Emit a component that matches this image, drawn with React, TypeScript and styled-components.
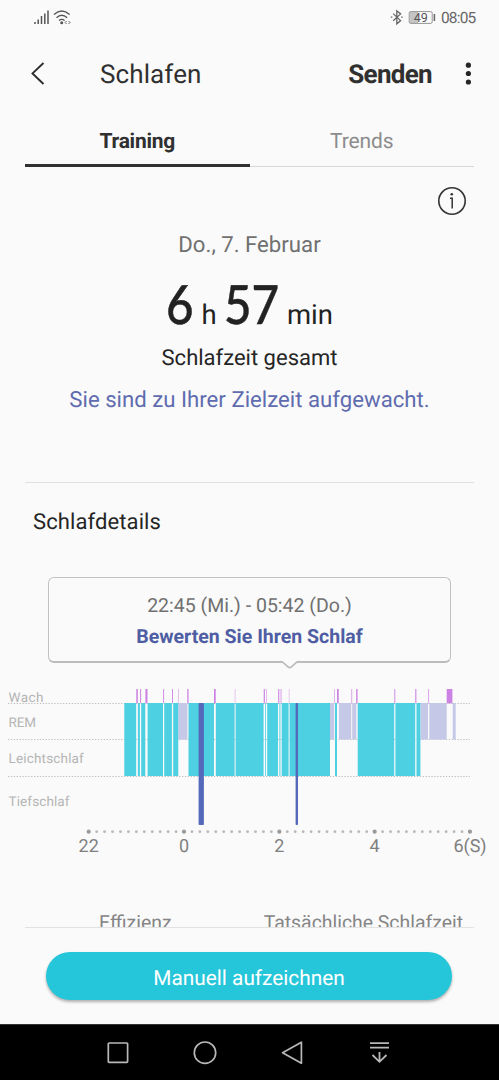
import React from "react";
import styled, { createGlobalStyle } from "styled-components";

const GlobalStyle = createGlobalStyle`
  * { box-sizing: border-box; }
  body { margin: 0; background: #fafafa; text-rendering: geometricPrecision; }
  button { font: inherit; border: 0; padding: 0; background: none; color: inherit; text-rendering: inherit; }
`;

const Screen = styled.div`
  width: 499px;
  height: 1080px;
  display: flex;
  flex-direction: column;
  overflow: hidden;
  background: #fafafa;
  font-family: Roboto, "Liberation Sans", sans-serif;
  color: #252525;
`;

const StatusBar = styled.div`
  height: 36px;
  display: flex;
  align-items: center;
  justify-content: space-between;
  padding: 0 23px 0 33px;
  svg { display: block; }
`;

const StatusGroup = styled.div`
  display: flex;
  align-items: center;
`;

const Clock = styled.span`
  font-size: 15.5px;
  line-height: 18px;
  letter-spacing: -0.85px;
  color: #666;
  margin: 0 -1px 0 5px;
  white-space: nowrap;
  width: 36px;
`;

const AppBar = styled.header`
  height: 76px;
  display: flex;
  align-items: center;
  padding: 0 25px 0 30px;
  svg { display: block; }
`;

const Title = styled.h1<{ $strong?: boolean }>`
  margin: 0;
  padding-top: 2px;
  font-size: 26px;
  line-height: 32px;
  font-weight: ${(p) => (p.$strong ? 700 : 400)};
  letter-spacing: ${(p) => (p.$strong ? "-0.7px" : "0.1px")};
  color: #303030;
  white-space: nowrap;
`;

const Spacer = styled.div`flex: 1;`;

const Tabs = styled.nav`
  height: 55px;
  margin: 0 25px;
  display: flex;
  box-shadow: inset 0 -1px #d8d8d8;
`;

const Tab = styled.div<{ $active?: boolean }>`
  flex: 1;
  display: flex;
  align-items: center;
  justify-content: center;
  padding-top: 7px;
  font-size: 21px;
  line-height: 26px;
  font-weight: ${(p) => (p.$active ? 700 : 400)};
  letter-spacing: ${(p) => (p.$active ? "-0.25px" : "-0.1px")};
  color: ${(p) => (p.$active ? "#303030" : "#8c8c8c")};
  border-bottom: 3px solid ${(p) => (p.$active ? "#303030" : "transparent")};
`;

const InfoRow = styled.div`
  height: 63px;
  display: flex;
  justify-content: flex-end;
  padding: 19px 32px 0 0;
`;

const Summary = styled.section`
  height: 253px;
  margin: 0 25px;
  display: flex;
  flex-direction: column;
  align-items: center;
  border-bottom: 1px solid #e0e0e0;
  white-space: nowrap;
`;

const Line = styled.div<{ $size: number; $height: number; $color: string; $track?: number; $bold?: boolean }>`
  font-size: ${(p) => p.$size}px;
  line-height: ${(p) => p.$height}px;
  color: ${(p) => p.$color};
  letter-spacing: ${(p) => p.$track ?? 0}px;
  font-weight: ${(p) => (p.$bold ? 700 : 400)};
  white-space: nowrap;
`;

const Duration = styled.div`
  height: 87px;
  padding-top: 9px;
  display: flex;
  align-items: baseline;
  line-height: 70px;
  color: #222;
`;

const Digits = styled.span<{ $width: number }>`
  font-family: Lato, sans-serif;
  font-size: 54px;
  font-weight: 500;
  -webkit-text-stroke: 0.5px currentColor;
  width: ${(p) => p.$width}px;
  transform: scaleX(0.88);
  transform-origin: 0 50%;
`;

const Unit = styled.span<{ $width: number }>`
  font-size: 27.5px;
  width: ${(p) => p.$width}px;
`;

const SectionTitle = styled.h2`
  margin: 0;
  height: 94px;
  padding: 25px 0 0 33px;
  font-size: 22px;
  line-height: 30px;
  font-weight: 400;
  letter-spacing: 0.1px;
  color: #252525;
`;

const Bubble = styled.div`
  position: relative;
  width: 403px;
  height: 86px;
  margin-left: 48px;
  padding-top: 12px;
  display: flex;
  flex-direction: column;
  align-items: center;
  border: 1.5px solid #c2c2c2;
  border-bottom: 2px solid #bcbcbc;
  border-radius: 6px;
`;

const BubbleTail = styled.svg`
  position: absolute;
  left: 230px;
  top: 82px;
`;

const ChartArea = styled.div`
  height: 203px;
  svg { display: block; }
`;

const Metrics = styled.div`
  height: 62px;
  margin: 0 25px;
  padding: 44px 11px 0 74px;
  display: flex;
  justify-content: space-between;
  overflow: hidden;
  border-bottom: 1px solid #e2e2e2;
`;

const Footer = styled.div`
  height: 96px;
  padding: 24px 47px 0 46px;
`;

const RecordButton = styled.button`
  width: 100%;
  height: 48px;
  padding-top: 6px;
  border-radius: 24px;
  background: #26c6da;
  box-shadow: 0 2px 3px rgba(0, 0, 0, 0.3);
  display: flex;
  align-items: center;
  justify-content: center;
`;

const NavBar = styled.div`
  height: 56px;
  background: #000;
  border-top: 1px solid #333;
  display: flex;
  align-items: center;
  padding: 0 75px 0 74px;
  svg { display: block; }
`;

const NavItem = styled.div`
  flex: 1;
  display: flex;
  justify-content: center;
`;

const LIGHT: [number, number][] = [
  [124.3, 136.2], [137.9, 139.9], [141.2, 145.3], [147.6, 163], [164.2, 171.9], [173.2, 178.3],
  [188.5, 214], [215.8, 234.6], [235.6, 263.6], [265.2, 266], [267.2, 278], [279.4, 280.4], [281.7, 288.6],
  [289.6, 330], [335, 337], [357.7, 394.2], [395.4, 415.2], [416.5, 420.4],
];
const REM: [number, number][] = [
  [178.3, 187.4], [330, 334.2], [338.9, 351.2], [352.2, 356.3], [420.6, 428], [429.3, 446.7], [452.7, 455.7],
];
const DEEP: [number, number][] = [[198.6, 203.9], [295.6, 298]];
const AWAKE: [number, number, number][] = [
  [136.2, 137.9, 0.9], [140, 141.1, 0.9], [145.4, 147.5, 1], [163, 164.1, 0.8], [172, 173, 0.9], [178.2, 179, 0.6],
  [187.2, 188.6, 0.9], [214, 215.7, 1], [234.7, 235.5, 0.5], [263.7, 265, 0.9], [266.1, 267, 0.6],
  [278.1, 279.3, 0.9], [280.5, 281.6, 0.7], [288.8, 289.6, 0.5], [334, 334.8, 0.7], [337, 338.7, 1],
  [351.3, 352.2, 0.8], [356.1, 357.6, 0.9], [394.2, 395.3, 0.8], [415.2, 416.4, 0.9], [428.1, 429.1, 0.7], [446.7, 452.4, 1],
];
const STAGES: [string, number, number][] = [
  ["Wach", 38.7, 35], ["REM", 63.9, 27.6], ["Leichtschlaf", 100.4, 75.3], ["Tiefschlaf", 143.2, 61],
];
const HOURS: [string, number][] = [["22", 88.7], ["0", 184], ["2", 279.3], ["4", 374.5], ["6(S)", 470]];

const SleepChart = () => (
  <svg width="499" height="203" viewBox="0 0 499 203">
    {STAGES.map(([name, y, w]) => (
      <text key={name} x="8.5" y={y} fontSize="13.5" fill="#b5b5b5" textLength={w}>{name}</text>
    ))}
    {[40.5, 76.5, 113.5].map((y) => (
      <line key={y} x1="8" x2="470" y1={y} y2={y} stroke="#bdbdbd" strokeDasharray="1.3 1.6" />
    ))}
    {REM.map(([a, b]) => <rect key={a} x={a} y="40" width={b - a} height="36.5" fill="#c5c9e7" />)}
    {LIGHT.map(([a, b]) => <rect key={a} x={a} y="40" width={b - a} height="73" fill="#4dd0e1" />)}
    {DEEP.map(([a, b]) => <rect key={a} x={a} y="40" width={b - a} height="122" rx="0.8" fill="#5469b9" />)}
    {AWAKE.map(([a, b, o]) => <rect key={a} x={a} y="26" width={b - a} height="14.3" fill="#cc82e2" opacity={o} />)}
    {Array.from({ length: 49 }, (_, i) => (
      <circle key={i} cx={88.7 + i * 7.943} cy="168.7" r={i % 12 ? 1.4 : 2.1} fill={i % 12 ? "#b8b8b8" : "#9a9a9a"} />
    ))}
    {HOURS.map(([t, x]) => (
      <text key={t} x={x} y="189" fontSize="18" fill="#808080" textAnchor="middle">{t}</text>
    ))}
  </svg>
);

export default function App() {
  return (
    <Screen>
      <GlobalStyle />
      <StatusBar>
        <StatusGroup>
          <svg width="40" height="18" viewBox="0 0 40 18" fill="none" stroke="#555">
            <path d="M2 13v2M5.2 10.5V15M8.5 7V15M11.8 4.5V15M15 1.5V15" strokeWidth="1.5" />
            <path d="M21 5.5q7.8-7 15.6 0M23.5 8.7q5.3-4.7 10.6 0M26 11.5q2.8-2.2 5.6 0" strokeWidth="1.4" />
            <circle cx="28.7" cy="13.7" r="1.5" fill="#555" stroke="none" />
            <path d="M33.6 12l-1.5 1.5 1.5 1.5M35.5 12l1.5 1.5-1.5 1.5" strokeWidth="0.9" />
          </svg>
        </StatusGroup>
        <StatusGroup>
          <svg width="46" height="18" viewBox="0 0 46 18" fill="none" stroke="#666">
            <path d="M3.2 4.6l7.4 7-3.8 3.2V1.8l3.8 3.1-7.4 6.8" strokeWidth="1.3" />
            <path d="M.8 8.2h1.5M11.2 8.2h1.5" strokeWidth="1.3" />
            <rect x="20" y="3" width="8" height="11" fill="#c5c5c5" stroke="none" />
            <rect x="19.2" y="2.6" width="23" height="11.8" rx="1.5" strokeWidth="0.9" stroke="#888" />
            <path d="M44.4 5v7" strokeWidth="1.5" />
            <text x="30.8" y="12.7" textAnchor="middle" fontSize="12.5" fill="#555" stroke="none">49</text>
          </svg>
          <Clock>08:05</Clock>
        </StatusGroup>
      </StatusBar>
      <AppBar>
        <svg width="70" height="26" viewBox="0 0 70 26" fill="none" stroke="#2c2c2c" strokeWidth="1.9">
          <path d="M13.5 2L2.5 12.4l11 10.6" />
        </svg>
        <Title>Schlafen</Title>
        <Spacer />
        <Title $strong>Senden</Title>
        <svg width="42" height="26" viewBox="0 0 42 26" fill="#252525">
          <circle cx="36.4" cy="4.2" r="2.6" />
          <circle cx="36.4" cy="12.5" r="2.6" />
          <circle cx="36.4" cy="21" r="2.6" />
        </svg>
      </AppBar>
      <Tabs>
        <Tab $active>Training</Tab>
        <Tab>Trends</Tab>
      </Tabs>
      <InfoRow>
        <svg width="30" height="30" viewBox="0 0 30 30" fill="none" stroke="#333">
          <circle cx="15" cy="15" r="13.2" strokeWidth="1.6" />
          <path d="M13 12.2h2.2v10.4" strokeWidth="1.5" />
          <circle cx="14.8" cy="8.2" r="1.3" fill="#333" stroke="none" />
        </svg>
      </InfoRow>
      <Summary>
        <Line $size={22.2} $height={30} $color="#707070">Do., 7. Februar</Line>
        <Duration>
          <Digits $width={35.5}>6</Digits>
          <Unit $width={22}>h</Unit>
          <Digits $width={63.5}>57</Digits>
          <Unit $width={46}>min</Unit>
        </Duration>
        <Line $size={22} $height={24} $color="#252525">Schlafzeit gesamt</Line>
        <Line $size={22.2} $height={58} $color="#5f6caf">Sie sind zu Ihrer Zielzeit aufgewacht.</Line>
      </Summary>
      <SectionTitle>Schlafdetails</SectionTitle>
      <Bubble>
        <Line $size={19.5} $height={31} $color="#707070">22:45 (Mi.) - 05:42 (Do.)</Line>
        <Line $size={19.5} $height={31} $color="#4f5da3" $bold>Bewerten Sie Ihren Schlaf</Line>
        <BubbleTail width="22" height="12" viewBox="0 0 22 12">
          <path d="M2 0L9 6.8q1.7 1.4 3.4 0L19.5 0z" fill="#fafafa" />
          <path d="M1 1.5q2 0 3.2 1.2L9 6.8q1.7 1.4 3.4 0L17.2 2.7q1.2-1.2 3.2-1.2" fill="none" stroke="#bcbcbc" strokeWidth="1.7" />
        </BubbleTail>
      </Bubble>
      <ChartArea>
        <SleepChart />
      </ChartArea>
      <Metrics>
        <Line $size={19.4} $height={26} $color="#858585">Effizienz</Line>
        <Line $size={19.4} $height={26} $color="#858585">Tatsächliche Schlafzeit</Line>
      </Metrics>
      <Footer>
        <RecordButton>
          <Line $size={20.8} $height={30} $color="#fff">Manuell aufzeichnen</Line>
        </RecordButton>
      </Footer>
      <NavBar>
        <NavItem>
          <svg width="26" height="26" viewBox="0 0 26 26" fill="none" stroke="#b8b8b8" strokeWidth="1.7"><rect x="3.3" y="3" width="19.3" height="19.3" rx="0.8" /></svg>
        </NavItem>
        <NavItem>
          <svg width="26" height="26" viewBox="0 0 26 26" fill="none" stroke="#b8b8b8" strokeWidth="1.7"><circle cx="13" cy="12.7" r="10.7" /></svg>
        </NavItem>
        <NavItem>
          <svg width="26" height="26" viewBox="0 0 26 26" fill="none" stroke="#b8b8b8" strokeWidth="1.7" strokeLinejoin="round"><path d="M2.6 12.7L21.4 2.2v21z" /></svg>
        </NavItem>
        <NavItem>
          <svg width="26" height="26" viewBox="0 0 26 26" fill="none" stroke="#b8b8b8" strokeWidth="1.8"><path d="M3 3.2h19M3 7.7h19M12.5 12v9.7M5.5 15l7 6.8 7-6.8" /></svg>
        </NavItem>
      </NavBar>
    </Screen>
  );
}
